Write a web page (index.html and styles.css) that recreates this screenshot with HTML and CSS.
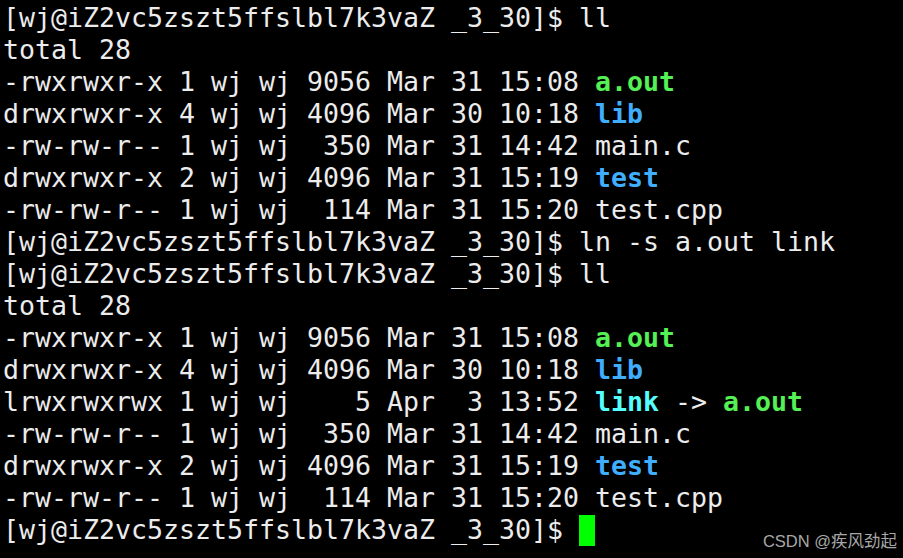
FILE: index.html
```html
<!DOCTYPE html>
<html>
<head>
<meta charset="utf-8">
<link rel="stylesheet" href="styles.css">
</head>
<body>
<div class="term">
<div class="ln">[wj@iZ2vc5zszt5ffslbl7k3vaZ _3_30]$ ll</div>
<div class="ln">total 28</div>
<div class="ln">-rwxrwxr-x 1 wj wj 9056 Mar 31 15:08 <span class="exe">a.out</span></div>
<div class="ln">drwxrwxr-x 4 wj wj 4096 Mar 30 10:18 <span class="dir">lib</span></div>
<div class="ln">-rw-rw-r-- 1 wj wj  350 Mar 31 14:42 main.c</div>
<div class="ln">drwxrwxr-x 2 wj wj 4096 Mar 31 15:19 <span class="dir">test</span></div>
<div class="ln">-rw-rw-r-- 1 wj wj  114 Mar 31 15:20 test.cpp</div>
<div class="ln">[wj@iZ2vc5zszt5ffslbl7k3vaZ _3_30]$ ln -s a.out link</div>
<div class="ln">[wj@iZ2vc5zszt5ffslbl7k3vaZ _3_30]$ ll</div>
<div class="ln">total 28</div>
<div class="ln">-rwxrwxr-x 1 wj wj 9056 Mar 31 15:08 <span class="exe">a.out</span></div>
<div class="ln">drwxrwxr-x 4 wj wj 4096 Mar 30 10:18 <span class="dir">lib</span></div>
<div class="ln">lrwxrwxrwx 1 wj wj    5 Apr  3 13:52 <span class="lnk">link</span> -&gt; <span class="exe">a.out</span></div>
<div class="ln">-rw-rw-r-- 1 wj wj  350 Mar 31 14:42 main.c</div>
<div class="ln">drwxrwxr-x 2 wj wj 4096 Mar 31 15:19 <span class="dir">test</span></div>
<div class="ln">-rw-rw-r-- 1 wj wj  114 Mar 31 15:20 test.cpp</div>
<div class="ln">[wj@iZ2vc5zszt5ffslbl7k3vaZ _3_30]$ <span class="cursor"> </span></div>
</div>
<div class="mark">CSDN @疾风劲起</div>
</body>
</html>
```
FILE: styles.css
```css
html, body {
  margin: 0;
  padding: 0;
  background: #000;
  width: 903px;
  height: 558px;
  overflow: hidden;
}
body {
  position: relative;
}
.term {
  padding: 2px 0 0 3px;
  font-family: "DejaVu Sans Mono", monospace;
  font-size: 26.58px;
  color: #ececec;
}
.ln {
  height: 32px;
  line-height: 32px;
  white-space: pre;
}
.exe {
  color: #55f055;
  font-weight: bold;
}
.dir {
  color: #40aeff;
  font-weight: bold;
}
.lnk {
  color: #55ffff;
  font-weight: bold;
}
.cursor {
  display: inline-block;
  width: 16px;
  height: 31px;
  background: #00ff00;
  vertical-align: top;
  margin-top: 1px;
}
.mark {
  position: absolute;
  right: 6px;
  bottom: 7px;
  font-family: "Liberation Sans", "Noto Sans CJK SC", sans-serif;
  font-size: 16.5px;
  color: #a8a8a8;
  line-height: 20px;
  white-space: nowrap;
}
```
